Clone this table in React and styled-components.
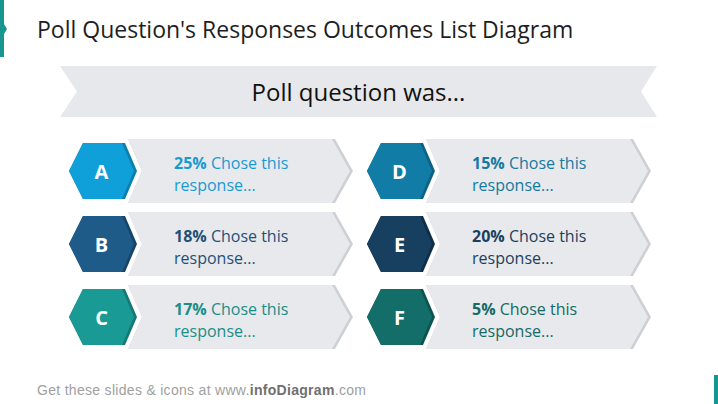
import React from "react";
import styled, { createGlobalStyle } from "styled-components";

const GlobalStyle = createGlobalStyle`
  html, body {
    margin: 0;
    padding: 0;
    background: #ffffff;
  }
  body {
    font-family: "Open Sans", "Noto Sans", sans-serif;
    overflow: hidden;
  }
`;

const Slide = styled.div`
  width: 718px;
  height: 404px;
  display: flex;
  flex-direction: column;
  background: #ffffff;
  overflow: hidden;
`;

const Header = styled.div`
  display: flex;
  align-items: center;
  height: 57px;
`;

const Accent = styled.div`
  width: 7px;
  height: 57px;
  background: #17958f;
  clip-path: polygon(0 0, 4px 0, 4px 24px, 7px 29px, 4px 34px, 4px 100%, 0 100%);
`;

const Title = styled.h1`
  margin: 0 0 0 30px;
  font-size: 23px;
  font-weight: 400;
  color: #1e1e1e;
`;

const Banner = styled.div`
  margin: 9px 61px 0 60px;
  height: 51px;
  background: #e6e8eb;
  clip-path: polygon(0 0, 100% 0, calc(100% - 16px) 50%, 100% 100%, 0 100%, 17px 50%);
  display: flex;
  align-items: center;
  justify-content: center;
  font-size: 24px;
  color: #111111;
`;

const Grid = styled.div`
  margin-top: 22px;
  padding-left: 69px;
  display: grid;
  grid-template-columns: 284px 284px;
  column-gap: 14px;
  row-gap: 9px;
`;

const Row = styled.div`
  display: flex;
  align-items: center;
  height: 64px;
`;

const HexBox = styled.div`
  display: grid;
  width: 68px;
  height: 56px;
  flex-shrink: 0;
  position: relative;
  z-index: 1;

  & > * {
    grid-area: 1 / 1;
  }
`;

const HexLetter = styled.span`
  display: flex;
  align-items: center;
  justify-content: center;
  padding-right: 3px;
  color: #ffffff;
  font-weight: 700;
  font-size: 20px;
`;

const CardShade = styled.div`
  flex: 1;
  height: 64px;
  margin-left: -9px;
  display: flex;
  background: #cdd1d6;
  clip-path: polygon(0 0, calc(100% - 18px) 0, 100% 50%, calc(100% - 18px) 100%, 0 100%, 14px 50%);
`;

const CardFace = styled.div`
  flex: 1;
  background: #e7e9ec;
  clip-path: polygon(0 0, calc(100% - 21px) 0, calc(100% - 3px) 50%, calc(100% - 21px) 100%, 0 100%, 14px 50%);
  padding: 5px 0 0 46px;
  display: flex;
  flex-direction: column;
  justify-content: center;
  font-size: 16px;
  line-height: 22px;
  color: ${(p) => p.$text};
`;

const Percent = styled.b`
  font-weight: 700;
`;

const Footer = styled.div`
  margin-top: auto;
  height: 29px;
  display: flex;
  align-items: flex-end;
  justify-content: space-between;
`;

const FooterText = styled.div`
  margin: 0 0 6px 37px;
  font-family: "Liberation Sans", Arial, sans-serif;
  font-size: 14px;
  letter-spacing: 0.3px;
  color: #a0a0a0;

  b {
    color: #707070;
  }
`;

const CornerBar = styled.div`
  width: 4px;
  height: 29px;
  background: #17958f;
`;

const responses = [
  { letter: "A", pct: "25%", color: "#0f9fd9", shade: "#0b7fae", text: "#1a9ad3" },
  { letter: "D", pct: "15%", color: "#117da6", shade: "#0b6284", text: "#147aa1" },
  { letter: "B", pct: "18%", color: "#1f5b88", shade: "#15456a", text: "#1f5077" },
  { letter: "E", pct: "20%", color: "#173f5f", shade: "#0f2e47", text: "#1b3f5e" },
  { letter: "C", pct: "17%", color: "#1a9a94", shade: "#127a75", text: "#1a8e89" },
  { letter: "F", pct: "5%", color: "#136e69", shade: "#0c5450", text: "#146a66" },
];

function Hex({ color, shade, letter }) {
  return (
    <HexBox>
      <svg width="68" height="56" viewBox="0 0 68 56">
        <polygon points="14,0 56,0 68,28 56,56 14,56 0,28" fill={shade} />
        <polygon points="14,0 53,0 65,28 53,56 14,56 0,28" fill={color} />
      </svg>
      <HexLetter>{letter}</HexLetter>
    </HexBox>
  );
}

function App() {
  return (
    <>
      <GlobalStyle />
      <Slide>
        <Header>
          <Accent />
          <Title>Poll Question's Responses Outcomes List Diagram</Title>
        </Header>
        <Banner>Poll question was...</Banner>
        <Grid>
          {responses.map((item) => (
            <Row key={item.letter}>
              <Hex color={item.color} shade={item.shade} letter={item.letter} />
              <CardShade>
                <CardFace $text={item.text}>
                  <span>
                    <Percent>{item.pct}</Percent> Chose this
                  </span>
                  <span>response...</span>
                </CardFace>
              </CardShade>
            </Row>
          ))}
        </Grid>
        <Footer>
          <FooterText>
            Get these slides &amp; icons at www.<b>infoDiagram</b>.com
          </FooterText>
          <CornerBar />
        </Footer>
      </Slide>
    </>
  );
}

export default App;
